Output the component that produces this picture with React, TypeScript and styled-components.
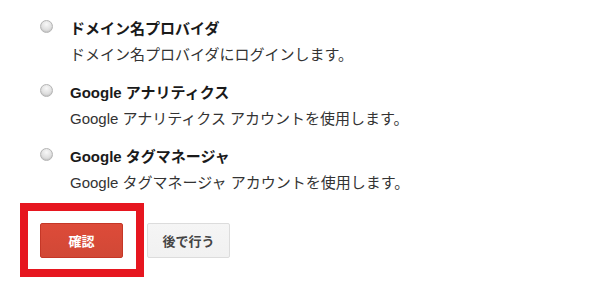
import React from "react";
import styled, { createGlobalStyle } from "styled-components";

const Global = createGlobalStyle`
  html, body { margin: 0; padding: 0; background: #ffffff; }
  body { font-family: "Liberation Sans", Arial, "Noto Sans CJK JP", sans-serif; }
`;

const Page = styled.div`
  width: 600px;
  height: 284px;
  box-sizing: border-box;
  padding: 19px 0 0 20px;
  overflow: hidden;
`;

const OptionList = styled.div`
  display: flex;
  flex-direction: column;
  gap: 18px;
  padding-left: 20px;
`;

const Option = styled.label`
  display: flex;
  align-items: flex-start;
  gap: 17px;
`;

const Radio = styled.span`
  flex: none;
  width: 13px;
  height: 13px;
  margin-top: 1px;
  box-sizing: border-box;
  border-radius: 50%;
  border: 1px solid #b4b4b4;
  background: radial-gradient(circle at 50% 30%, #f8f8f8 0%, #e0e0e0 55%, #cccccc 100%);
  box-shadow: inset 0 -1px 1px rgba(0, 0, 0, 0.08);
`;

const OptionText = styled.div`
  display: flex;
  flex-direction: column;
  gap: 6px;
`;

const Title = styled.div`
  font-size: 15px;
  line-height: 20px;
  font-weight: bold;
  color: #1a1a1a;
`;

const Desc = styled.div`
  font-size: 15px;
  line-height: 20px;
  color: #333333;
`;

const Actions = styled.div`
  display: flex;
  align-items: center;
  margin-top: 10px;
`;

const Highlight = styled.div`
  border: 8px solid #e6161f;
  padding: 12px 13px 11px 12px;
  display: flex;
`;

const Button = styled.button<{ $primary?: boolean }>`
  width: 83px;
  height: 35px;
  box-sizing: border-box;
  border-radius: 2px;
  font-family: "Liberation Sans", Arial, "Noto Sans CJK JP", sans-serif;
  font-size: 13px;
  font-weight: bold;
  cursor: pointer;
  padding: 0;
  border: 1px solid ${(p) => (p.$primary ? "#c53727" : "#dcdcdc")};
  color: ${(p) => (p.$primary ? "#ffffff" : "#444444")};
  background: ${(p) =>
    p.$primary
      ? "linear-gradient(#dd4b39, #d14836)"
      : "linear-gradient(#f5f5f5, #f1f1f1)"};
`;

const SecondaryButton = styled(Button)`
  margin-left: 3px;
`;

const options = [
  { title: "ドメイン名プロバイダ", desc: "ドメイン名プロバイダにログインします。" },
  { title: "Google アナリティクス", desc: "Google アナリティクス アカウントを使用します。" },
  { title: "Google タグマネージャ", desc: "Google タグマネージャ アカウントを使用します。" },
];

export default function App() {
  return (
    <>
      <Global />
      <Page>
        <OptionList>
          {options.map((o) => (
            <Option key={o.title}>
              <Radio />
              <OptionText>
                <Title>{o.title}</Title>
                <Desc>{o.desc}</Desc>
              </OptionText>
            </Option>
          ))}
        </OptionList>
        <Actions>
          <Highlight>
            <Button $primary>確認</Button>
          </Highlight>
          <SecondaryButton>後で行う</SecondaryButton>
        </Actions>
      </Page>
    </>
  );
}
